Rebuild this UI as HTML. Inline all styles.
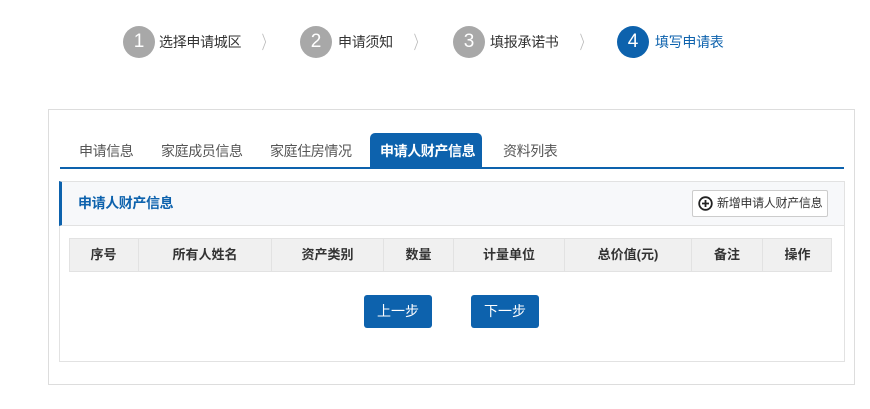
<!DOCTYPE html>
<html><head><meta charset="utf-8"><style>
*{margin:0;padding:0;box-sizing:border-box}
body{width:870px;height:409px;background:#fff;font-family:"Liberation Sans","Noto Sans CJK SC",sans-serif;position:relative;overflow:hidden;color:#333}
.a{position:absolute;white-space:nowrap}
.c{width:32px;height:32px;border-radius:50%;background:#a8a8a8;color:#fff;font-size:19px;line-height:32px;text-align:center}
.st{font-size:14px;color:#333;line-height:20px;letter-spacing:-0.3px}
.ch{color:#bbb;font-size:18px;line-height:20px;transform:scaleX(.6)}
.tab{font-size:14px;color:#555;line-height:20px;top:141px;letter-spacing:-0.4px}
.h{position:absolute;top:238px;height:34px;line-height:34px;text-align:center;font-size:13px;font-weight:bold;border-left:1px solid #e2e2e2}
.btn{position:absolute;top:295px;width:68px;height:33px;background:#0d62ad;color:#fff;border-radius:3px;font-size:14px;text-align:center;line-height:33px}
</style></head><body>
<div class="a c" style="left:123px;top:26px">1</div>
<div class="a st" style="left:159px;top:32px">选择申请城区</div>
<div class="a ch" style="left:258px;top:33px">〉</div>
<div class="a c" style="left:300px;top:26px">2</div>
<div class="a st" style="left:338px;top:32px">申请须知</div>
<div class="a ch" style="left:410px;top:33px">〉</div>
<div class="a c" style="left:453px;top:26px">3</div>
<div class="a st" style="left:490px;top:32px">填报承诺书</div>
<div class="a ch" style="left:576px;top:33px">〉</div>
<div class="a c" style="left:617px;top:26px;background:#0d62ad">4</div>
<div class="a st" style="left:655px;top:32px;color:#0d62ad">填写申请表</div>

<div class="a" style="left:48px;top:109px;width:807px;height:276px;border:1px solid #ddd"></div>
<div class="a" style="left:370px;top:133px;width:112px;height:36px;background:#0d62ad;border-radius:5px 5px 0 0"></div>
<div class="a" style="left:60px;top:167px;width:784px;height:2px;background:#0d62ad"></div>
<div class="a tab" style="left:79px">申请信息</div>
<div class="a tab" style="left:161px">家庭成员信息</div>
<div class="a tab" style="left:270px">家庭住房情况</div>
<div class="a tab" style="left:380px;color:#fff;font-weight:bold">申请人财产信息</div>
<div class="a tab" style="left:503px">资料列表</div>

<div class="a" style="left:59px;top:181px;width:786px;height:181px;border:1px solid #e2e2e2"></div>
<div class="a" style="left:59px;top:181px;width:786px;height:45px;background:#f7f8fa;border:1px solid #e2e2e2;border-left:3px solid #0d62ad"></div>
<div class="a" style="left:78px;top:193px;font-size:14px;font-weight:bold;color:#0d62ad;line-height:20px;letter-spacing:-0.4px">申请人财产信息</div>
<div class="a" style="left:692px;top:190px;width:136px;height:27px;border:1px solid #ccc;border-radius:2px;background:#fff;font-size:12px;line-height:25px;padding-left:24px;color:#333;letter-spacing:-0.3px;overflow:hidden">新增申请人财产信息</div>
<svg class="a" style="left:698px;top:196px" width="15" height="15" viewBox="0 0 15 15"><circle cx="7.5" cy="7.5" r="6.3" fill="none" stroke="#222" stroke-width="1.8"/><path d="M7.5 4v7M4 7.5h7" stroke="#222" stroke-width="1.8"/></svg>

<div class="a" style="left:69px;top:238px;width:763px;height:34px;background:#f0f0f0;border:1px solid #e2e2e2"></div>
<div class="h" style="left:69px;width:69px;border-left:0">序号</div>
<div class="h" style="left:138px;width:133px">所有人姓名</div>
<div class="h" style="left:271px;width:112px">资产类别</div>
<div class="h" style="left:383px;width:70px">数量</div>
<div class="h" style="left:453px;width:111px">计量单位</div>
<div class="h" style="left:564px;width:127px">总价值(元)</div>
<div class="h" style="left:691px;width:71px">备注</div>
<div class="h" style="left:762px;width:70px">操作</div>
<div class="btn" style="left:364px">上一步</div>
<div class="btn" style="left:471px">下一步</div>
</body></html>
